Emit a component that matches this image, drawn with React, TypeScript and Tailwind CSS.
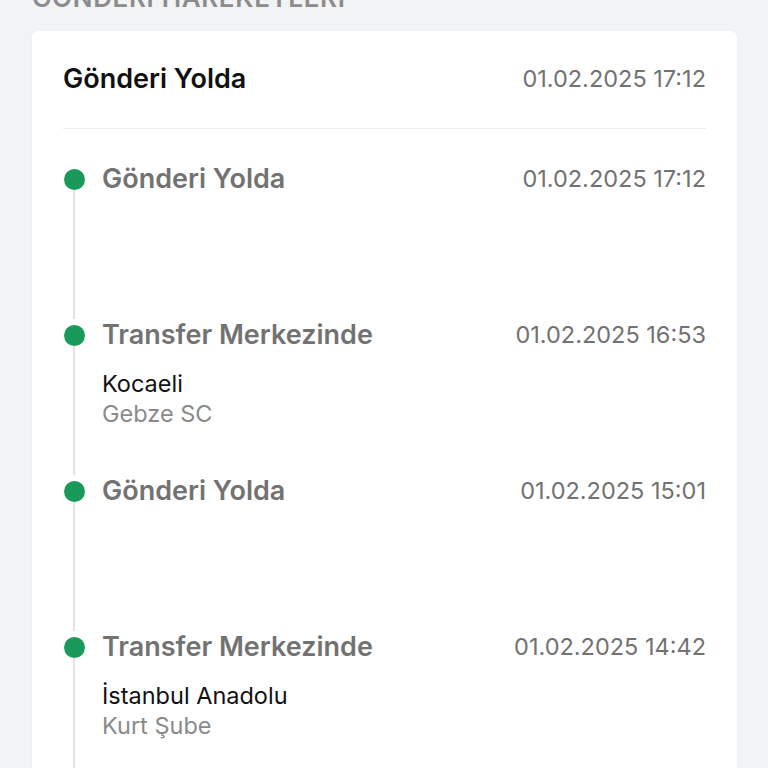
import React from "react";

type Move = {
  title: string;
  date: string;
  city?: string;
  branch?: string;
};

const moves: Move[] = [
  { title: "Gönderi Yolda", date: "01.02.2025 17:12" },
  { title: "Transfer Merkezinde", date: "01.02.2025 16:53", city: "Kocaeli", branch: "Gebze SC" },
  { title: "Gönderi Yolda", date: "01.02.2025 15:01" },
  { title: "Transfer Merkezinde", date: "01.02.2025 14:42", city: "İstanbul Anadolu", branch: "Kurt Şube" },
  { title: "Gönderi Yolda", date: "01.02.2025 14:10" },
];

const TimelineItem = ({ move }: { move: Move }) => {
  return (
    <div className="flex h-[156px]">
      <div className="flex flex-col items-center w-[22px] shrink-0 pt-[6px]">
        <span className="w-[21px] h-[21px] rounded-full bg-[#1a9a5a]" />
        <span className="w-[2px] flex-1 bg-[#e3e3e3]" />
      </div>
      <div className="flex-1 pl-[17px]">
        <div className="flex items-center justify-between">
          <p className="text-[27px] leading-[32px] font-semibold text-[#727272]">{move.title}</p>
          <p className="text-[23.5px] leading-[32px] text-[#727272]">{move.date}</p>
        </div>
        {move.city && (
          <div className="mt-[18px]">
            <p className="text-[23.5px] leading-[30px] text-[#111111]">{move.city}</p>
            <p className="text-[23.5px] leading-[30px] text-[#8a8a8a]">{move.branch}</p>
          </div>
        )}
      </div>
    </div>
  );
};

export default function App() {
  return (
    <div
      className="min-h-[768px] h-[768px] overflow-hidden bg-[#f2f3f5]"
      style={{ fontFamily: "Inter, 'Noto Sans', sans-serif" }}
    >
      <h2 className="-mt-[18px] mb-[17px] px-[32px] text-[26px] leading-[32px] font-semibold tracking-wide text-[#8c8c8c] uppercase">
        GÖNDERİ HAREKETLERİ
      </h2>

      <div className="mx-[32px] w-[705px] bg-white rounded-md shadow-[0_0_2px_rgba(0,0,0,0.06)] px-[31px]">
        <div className="flex items-center justify-between pt-[32px] pb-[33px] border-b border-[#eeeeee]">
          <p className="text-[27px] leading-[32px] font-semibold text-[#111111]">Gönderi Yolda</p>
          <p className="text-[23.5px] leading-[32px] text-[#727272]">01.02.2025 17:12</p>
        </div>

        <div className="pt-[34px]">
          {moves.map((move, i) => (
            <TimelineItem key={i} move={move} />
          ))}
        </div>
      </div>
    </div>
  );
}
